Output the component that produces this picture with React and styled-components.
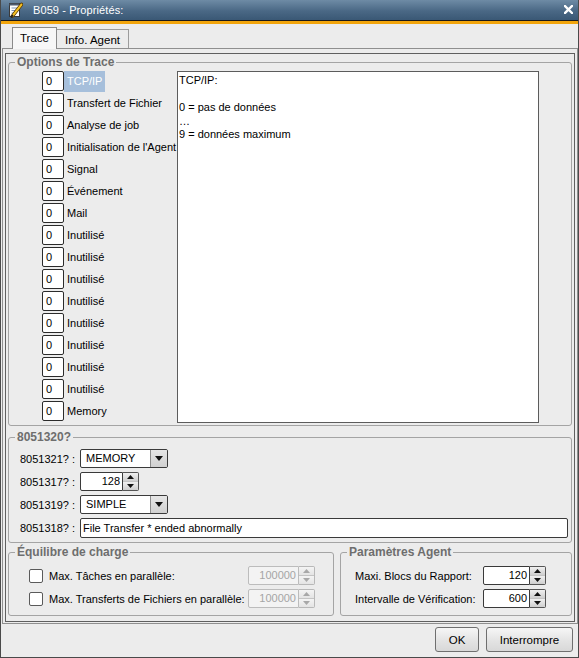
import React from 'react';
import styled, { createGlobalStyle } from 'styled-components';

const GlobalStyle = createGlobalStyle`
  html, body { margin: 0; padding: 0; background: #ececec; }
  body { font-family: "Liberation Sans", Arial, sans-serif; font-size: 11px; color: #000; }
  * { box-sizing: border-box; }
`;

const Window = styled.div`
  width: 579px;
  height: 658px;
  display: flex;
  flex-direction: column;
  background: #ececec;
  border: 1px solid #4a4a4a;
  border-top: none;
`;

const TitleBar = styled.div`
  height: 20px;
  flex: 0 0 20px;
  display: flex;
  align-items: center;
  padding: 0 4px 0 8px;
  background: linear-gradient(#6e8ba5, #4a6885 55%, #3a5875);
  color: #fff;
`;

const TitleText = styled.span`
  flex: 1;
  margin-left: 10px;
  font-size: 11px;
  letter-spacing: 0.1px;
`;

const CloseGlyph = styled.svg`
  width: 9px;
  height: 9px;
  margin-right: 1px;
  margin-top: -2px;
`;

const AccentBar = styled.div`
  flex: 0 0 4px;
  border-top: 1px solid #1a1a1a;
  background: #f2a50c;
`;

const TabStrip = styled.div`
  flex: 0 0 24px;
  display: flex;
  align-items: flex-end;
  padding-left: 11px;
  position: relative;
  z-index: 1;
`;

const Tab = styled.div`
  display: flex;
  align-items: center;
  justify-content: center;
  font-size: 11.5px;
  border: 1px solid ${p => (p.$active ? '#8a8a8a' : '#9c9c9c')};
  ${p =>
    p.$active
      ? `height: 22px; margin-bottom: -1px; border-bottom: none; background: #f7f7f7; padding: 0 7px 1px;`
      : `height: 19px; border-left: none; border-bottom: none; background: #ececec; padding: 1px 8px 0;`}
`;

const TabPane = styled.div`
  flex: 0 0 576px;
  margin-left: 1px;
  border: 1px solid #8f8f8f;
  padding: 4px 2px 1px 2px;
  display: flex;
`;

const TabPage = styled.div`
  flex: 1;
  border: 1px solid #5f5f5f;
  padding: 0 2px;
  display: flex;
  flex-direction: column;
`;

const Group = styled.fieldset`
  margin: ${p => p.$mt || 0}px 0 0;
  padding: 0;
  border: 1px solid #a4a4a4;
  border-radius: 3px;
  min-width: 0;
  flex: ${p => (p.$width ? `0 0 ${p.$width}px` : p.$grow ? '1 1 0' : '0 0 auto')};
`;

const Legend = styled.legend`
  margin-left: 6px;
  padding: 0 2px;
  font-size: 12px;
  line-height: 14px;
  font-weight: bold;
  color: #6e6e6e;
`;

const TraceBody = styled.div`
  display: flex;
  padding: 1px 0 2px 33px;
`;

const TraceList = styled.div`
  width: 135px;
  display: flex;
  flex-direction: column;
`;

const TraceRow = styled.div`
  height: 22px;
  display: flex;
  align-items: center;
`;

const LevelBox = styled.div`
  width: 22px;
  height: 20px;
  flex: 0 0 22px;
  border: 1px solid #2b2b2b;
  border-radius: 2px;
  background: #fff;
  padding-left: 3px;
  line-height: 18px;
`;

const TraceLabel = styled.div`
  height: 21px;
  display: flex;
  align-items: center;
  padding: 0 3px;
  white-space: nowrap;
  background: ${p => (p.$selected ? '#a6bfdb' : 'transparent')};
  color: ${p => (p.$selected ? '#fff' : '#000')};
`;

const InfoBox = styled.div`
  width: 362px;
  height: 352px;
  margin-top: 1px;
  border: 1px solid #5c5c5c;
  background: #fff;
  padding: 2px 1px;
  line-height: 13.6px;
  white-space: pre-line;
`;

const FormBody = styled.div`
  display: flex;
  flex-direction: column;
  padding: 3px 3px 3px 11px;
`;

const FormRow = styled.div`
  height: 23px;
  display: flex;
  align-items: center;
`;

const FieldLabel = styled.div`
  width: ${p => p.$w}px;
  flex: 0 0 ${p => p.$w}px;
  white-space: nowrap;
`;

const Combo = styled.div`
  width: 88px;
  height: 19px;
  display: flex;
  border: 1px solid #3a3a3a;
  border-radius: 2px;
  background: #fff;
  overflow: hidden;
`;

const ComboText = styled.div`
  flex: 1;
  padding-left: 5px;
  line-height: 17px;
`;

const ComboButton = styled.div`
  width: 17px;
  display: flex;
  align-items: center;
  justify-content: center;
  border-left: 1px solid #8c8c8c;
  background: linear-gradient(#e6e6e6, #d0d0d0);
`;

const Spin = styled.div`
  display: flex;
  height: 19px;
`;

const NumberBox = styled.div`
  width: ${p => p.$w}px;
  height: 100%;
  border: 1px solid ${p => (p.$disabled ? '#bcbcbc' : '#3a3a3a')};
  border-radius: 2px 0 0 2px;
  background: ${p => (p.$disabled ? '#f3f3f3' : '#fff')};
  color: ${p => (p.$disabled ? '#a5a5a5' : '#000')};
  text-align: right;
  padding-right: 2px;
  line-height: 17px;
`;

const SpinButtons = styled.div`
  width: 16px;
  height: 100%;
  display: flex;
  flex-direction: column;
  border: 1px solid ${p => (p.$disabled ? '#b8b8b8' : '#555')};
  border-left: none;
  border-radius: 0 2px 2px 0;
  overflow: hidden;
`;

const SpinButton = styled.div`
  flex: 1;
  display: flex;
  align-items: center;
  justify-content: center;
  background: ${p => (p.$disabled ? 'linear-gradient(#f4f4f4, #e4e4e4)' : 'linear-gradient(#f0f0f0, #cfcfcf)')};
  & + & { border-top: 1px solid ${p => (p.$disabled ? '#c4c4c4' : '#6a6a6a')}; }
`;

const TextField = styled.div`
  flex: 1;
  height: 20px;
  border: 1px solid #3a3a3a;
  border-radius: 2px;
  background: #fff;
  padding-left: 2px;
  line-height: 18px;
`;

const BottomGroups = styled.div`
  display: flex;
  gap: 6px;
  margin-top: 2px;
`;

const OptionBody = styled.div`
  display: flex;
  flex-direction: column;
  gap: 4px;
  padding: ${p => p.$pad};
`;

const OptionRow = styled.div`
  height: 19px;
  display: flex;
  align-items: center;
  justify-content: space-between;
`;

const CheckWrap = styled.div`
  display: flex;
  align-items: center;
  gap: 6px;
`;

const CheckBox = styled.div`
  width: 14px;
  height: 14px;
  border: 1px solid #5a5a5a;
  border-radius: 2px;
  background: #fff;
`;

const ButtonBar = styled.div`
  flex: 0 0 33px;
  display: flex;
  justify-content: flex-end;
  gap: 7px;
  padding: 3px 5px 5px;
`;

const Button = styled.div`
  width: ${p => p.$w}px;
  height: 25px;
  display: flex;
  align-items: center;
  justify-content: center;
  font-size: 11.5px;
  border: 1px solid #6f6f6f;
  border-radius: 3px;
  background: linear-gradient(#f6f6f6, #e2e2e2 60%, #d8d8d8);
`;

const Arrow = ({ up, color = '#111' }) => (
  <svg width="7" height="4" viewBox="0 0 7 4">
    <polygon points={up ? '0,4 3.5,0 7,4' : '0,0 7,0 3.5,4'} fill={color} />
  </svg>
);

const SpinField = ({ value, width, disabled }) => (
  <Spin>
    <NumberBox $w={width} $disabled={disabled}>{value}</NumberBox>
    <SpinButtons $disabled={disabled}>
      <SpinButton $disabled={disabled}><Arrow up color={disabled ? '#a8a8a8' : '#111'} /></SpinButton>
      <SpinButton $disabled={disabled}><Arrow color={disabled ? '#a8a8a8' : '#111'} /></SpinButton>
    </SpinButtons>
  </Spin>
);

const ComboBox = ({ value }) => (
  <Combo>
    <ComboText>{value}</ComboText>
    <ComboButton>
      <svg width="8" height="5" viewBox="0 0 8 5"><polygon points="0,0 8,0 4,5" fill="#111" /></svg>
    </ComboButton>
  </Combo>
);

const TitleIcon = () => (
  <svg width="14" height="16" viewBox="0 0 14 16">
    <rect x="0.5" y="1.5" width="10" height="13" fill="#fff" stroke="#3a3a3a" />
    <rect x="0.5" y="1.5" width="10" height="2" fill="#4c5a6e" />
    <line x1="2.5" y1="6" x2="8.5" y2="6" stroke="#7f97b8" />
    <line x1="2.5" y1="8.5" x2="8.5" y2="8.5" stroke="#7f97b8" />
    <line x1="2.5" y1="11" x2="6.5" y2="11" stroke="#7f97b8" />
    <line x1="3.5" y1="14" x2="12.5" y2="2.5" stroke="#5a3a00" strokeWidth="3.6" strokeLinecap="round" />
    <line x1="4" y1="13.4" x2="12.4" y2="2.6" stroke="#f6c226" strokeWidth="2" strokeLinecap="round" />
    <line x1="2" y1="15.5" x2="4" y2="13" stroke="#222" strokeWidth="1.4" />
  </svg>
);

const traceItems = [
  'TCP/IP',
  'Transfert de Fichier',
  'Analyse de job',
  "Initialisation de l'Agent",
  'Signal',
  'Événement',
  'Mail',
  'Inutilisé',
  'Inutilisé',
  'Inutilisé',
  'Inutilisé',
  'Inutilisé',
  'Inutilisé',
  'Inutilisé',
  'Inutilisé',
  'Memory',
];

export default function App() {
  return (
    <>
      <GlobalStyle />
      <Window>
        <TitleBar>
          <TitleIcon />
          <TitleText>B059 - Propriétés:</TitleText>
          <CloseGlyph viewBox="0 0 9 9">
            <path d="M1 1 L8 8 M8 1 L1 8" stroke="#fff" strokeWidth="2.4" strokeLinecap="square" />
          </CloseGlyph>
        </TitleBar>
        <AccentBar />
        <TabStrip>
          <Tab $active>Trace</Tab>
          <Tab>Info. Agent</Tab>
        </TabStrip>
        <TabPane>
          <TabPage>
            <Group $mt={1}>
              <Legend>Options de Trace</Legend>
              <TraceBody>
                <TraceList>
                  {traceItems.map((label, i) => (
                    <TraceRow key={i}>
                      <LevelBox>0</LevelBox>
                      <TraceLabel $selected={i === 0}>{label}</TraceLabel>
                    </TraceRow>
                  ))}
                </TraceList>
                <InfoBox>{'TCP/IP:\n\n0 = pas de données\n…\n9 = données maximum'}</InfoBox>
              </TraceBody>
            </Group>
            <Group $mt={4}>
              <Legend>8051320?</Legend>
              <FormBody>
                <FormRow>
                  <FieldLabel $w={60}>8051321? :</FieldLabel>
                  <ComboBox value="MEMORY" />
                </FormRow>
                <FormRow>
                  <FieldLabel $w={60}>8051317? :</FieldLabel>
                  <SpinField value="128" width={43} />
                </FormRow>
                <FormRow>
                  <FieldLabel $w={60}>8051319? :</FieldLabel>
                  <ComboBox value="SIMPLE" />
                </FormRow>
                <FormRow>
                  <FieldLabel $w={60}>8051318? :</FieldLabel>
                  <TextField>File Transfer * ended abnormally</TextField>
                </FormRow>
              </FormBody>
            </Group>
            <BottomGroups>
              <Group $width={326}>
                <Legend>Équilibre de charge</Legend>
                <OptionBody $pad="7px 18px 7px 20px">
                  <OptionRow>
                    <CheckWrap>
                      <CheckBox />
                      <span>Max. Tâches en parallèle:</span>
                    </CheckWrap>
                    <SpinField value="100000" width={51} disabled />
                  </OptionRow>
                  <OptionRow>
                    <CheckWrap>
                      <CheckBox />
                      <span>Max. Transferts de Fichiers en parallèle:</span>
                    </CheckWrap>
                    <SpinField value="100000" width={51} disabled />
                  </OptionRow>
                </OptionBody>
              </Group>
              <Group $grow>
                <Legend>Paramètres Agent</Legend>
                <OptionBody $pad="7px 25px 7px 14px">
                  <OptionRow>
                    <span>Maxi. Blocs du Rapport:</span>
                    <SpinField value="120" width={47} />
                  </OptionRow>
                  <OptionRow>
                    <span>Intervalle de Vérification:</span>
                    <SpinField value="600" width={47} />
                  </OptionRow>
                </OptionBody>
              </Group>
            </BottomGroups>
          </TabPage>
        </TabPane>
        <ButtonBar>
          <Button $w={44}>OK</Button>
          <Button $w={87}>Interrompre</Button>
        </ButtonBar>
      </Window>
    </>
  );
}
